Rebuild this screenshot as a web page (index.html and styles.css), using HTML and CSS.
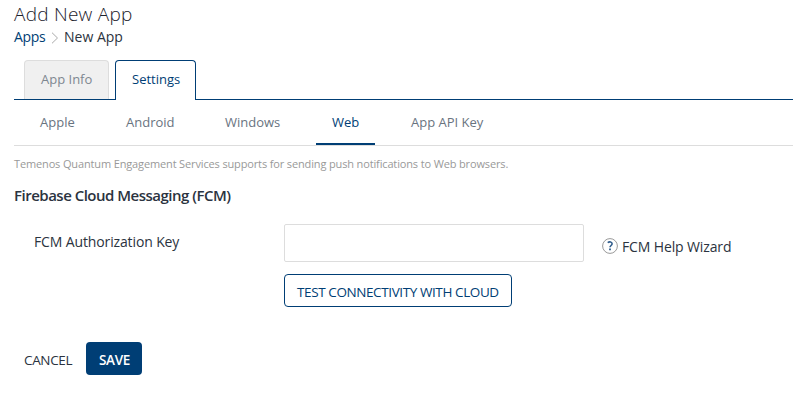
FILE: index.html
```html
<!DOCTYPE html>
<html lang="en">
<head>
<meta charset="utf-8">
<title>Add New App</title>
<link rel="stylesheet" href="styles.css">
</head>
<body>
<main class="page">
  <h1 class="title"><span>Add New App</span></h1>
  <nav class="crumbs">
    <a class="crumb-apps">Apps</a>
    <svg class="chevron" width="8" height="12" viewBox="0 0 8 12"><path d="M1 .7 6.5 6 1 11.3" fill="none" stroke="#aaa"/></svg>
    <span class="crumb-new">New App</span>
  </nav>
  <div class="tabs">
    <div class="tab tab-info"><span>App Info</span></div>
    <div class="tab tab-settings"><span>Settings</span></div>
  </div>
  <nav class="platforms">
    <a class="platform apple"><span>Apple</span></a>
    <a class="platform android"><span>Android</span></a>
    <a class="platform windows"><span>Windows</span></a>
    <a class="platform web"><span>Web</span></a>
    <a class="platform api"><span>App API Key</span></a>
  </nav>
  <p class="description"><span>Temenos Quantum Engagement Services supports for sending push notifications to Web browsers.</span></p>
  <h2 class="section"><span>Firebase Cloud Messaging (FCM)</span></h2>
  <div class="row">
    <label class="label" for="key"><span>FCM Authorization Key</span></label>
    <input class="field" id="key" type="text">
    <a class="help">
      <svg width="16" height="16" viewBox="0 0 16 16" fill="none"><circle cx="8" cy="8" r="7.4" stroke="#999"/><path d="M5.7 4.6C7.5 3.4 10.1 3.8 10.1 5.8C10.1 7.5 8 7.5 8 9.3" stroke="#305d8c" stroke-width="1.6"/><path d="M7.1 10.6h1.8v1.7H7.1z" fill="#305d8c"/></svg>
      <span>FCM Help Wizard</span>
    </a>
  </div>
  <button class="test"><span>TEST CONNECTIVITY WITH CLOUD</span></button>
  <div class="actions">
    <a class="cancel"><span>CANCEL</span></a>
    <button class="save"><span>SAVE</span></button>
  </div>
</main>
</body>
</html>
```
FILE: styles.css
```css
* { box-sizing: border-box; }
body { margin: 0; background: #fff; color: #2b3340; font: 13px/20px "Open Sans", "Noto Sans", sans-serif; white-space: nowrap; overflow: hidden; }
.page { padding-left: 14px; }
.title { margin: 0; padding-top: 2px; height: 27px; color: #1c222c; font-size: 19px; line-height: 24px; font-weight: 300; letter-spacing: .25px; }
.crumbs { display: flex; align-items: center; height: 20px; color: #2b3340; font-size: 14px; letter-spacing: 0; }
.crumb-apps { width: 37px; color: #003e75; letter-spacing: -.3px; }
.chevron { margin: 2px 5px 0 0; }
.tabs { display: flex; height: 53px; padding: 13px 0 0 10px; border-bottom: 1px solid #003e75; }
.tab { height: 39px; line-height: 36px; border: 1px solid #ddd; border-bottom: 0; border-radius: 4px 4px 0 0; }
.tab-info { width: 85px; padding-left: 16px; margin-right: 6px; background: #f0f0f0; color: #7e8790; }
.tab-settings { width: 81px; height: 40px; padding-left: 16px; background: #fff; border-color: #003e75; color: #003e75; }
.platforms { display: flex; height: 46px; border-bottom: 1px solid #ddd; line-height: 44px; color: #69747f; }
.platform { height: 45px; padding-left: 16px; }
.apple { width: 86px; margin-left: 10px; }
.android { width: 99px; }
.windows { width: 107px; }
.web { width: 59px; border-bottom: 2px solid #003e75; color: #003e75; }
.api { margin-left: 20px; }
.description { margin: 0; padding-top: 8px; height: 38px; color: #999; font-size: 11px; letter-spacing: -.14px; }
.section { margin: 0; padding-top: 1px; height: 40px; font-size: 15px; font-weight: 600; letter-spacing: -.5px; }
.row { display: flex; height: 38px; font-size: 14px; letter-spacing: -.13px; }
.label { width: 270px; padding: 8px 0 0 20px; }
.field { width: 300px; height: 38px; margin: 0; border: 1px solid #ddd; border-radius: 2px; outline: 0; }
.help { display: flex; padding-top: 13px; margin-left: 18px; gap: 4px; }
.help svg { margin-top: 1px; }
.test { display: block; width: 228px; height: 33px; margin: 12px 0 0 270px; padding: 2px 0 0 12px; text-align: left; font: 13.5px/20px "Open Sans", sans-serif; letter-spacing: -.4px; color: #003e75; background: #fff; border: 1px solid #003e75; border-radius: 4px; }
.actions { display: flex; margin: 35px 0 0 10px; }
.cancel { width: 62px; padding-top: 8px; font-size: 13.5px; letter-spacing: -.35px; }
.save { width: 56px; height: 33px; padding: 2px 0 0 13px; text-align: left; border: 0; border-radius: 4px; background: #003e75; color: #fff; font: 600 13.5px/20px "Open Sans", sans-serif; letter-spacing: -.35px; }
```
